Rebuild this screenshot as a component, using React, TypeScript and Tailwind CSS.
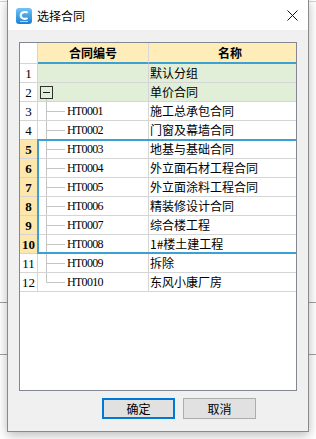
import React from "react";

type Row = { n: number; code?: string; name: string; green?: boolean; box?: boolean; last?: boolean; sel?: boolean };

const rows: Row[] = [
  { n: 1, name: "默认分组", green: true },
  { n: 2, name: "单价合同", green: true, box: true },
  { n: 3, code: "HT0001", name: "施工总承包合同" },
  { n: 4, code: "HT0002", name: "门窗及幕墙合同" },
  { n: 5, code: "HT0003", name: "地基与基础合同", sel: true },
  { n: 6, code: "HT0004", name: "外立面石材工程合同", sel: true },
  { n: 7, code: "HT0005", name: "外立面涂料工程合同", sel: true },
  { n: 8, code: "HT0006", name: "精装修设计合同", sel: true },
  { n: 9, code: "HT0007", name: "综合楼工程", sel: true },
  { n: 10, code: "HT0008", name: "1#楼土建工程", sel: true },
  { n: 11, code: "HT0009", name: "拆除" },
  { n: 12, code: "HT0010", name: "东风小康厂房", last: true },
];

function Connector({ last }: { last?: boolean }) {
  return (
    <svg width="29" height="18" className="shrink-0">
      <line x1="8.5" y1="0" x2="8.5" y2={last ? 9.5 : 18} stroke="#c4c4c4" strokeWidth="1" />
      <line x1="8.5" y1="9.5" x2="27" y2="9.5" stroke="#c4c4c4" strokeWidth="1" />
    </svg>
  );
}

function MinusBox() {
  return (
    <svg width="29" height="18" className="shrink-0">
      <rect x="2.5" y="3.5" width="12" height="12" fill="none" stroke="#303030" strokeWidth="1" />
      <line x1="5" y1="9.5" x2="12" y2="9.5" stroke="#202020" strokeWidth="1" />
      <line x1="8.5" y1="16" x2="8.5" y2="18" stroke="#c4c4c4" strokeWidth="1" />
    </svg>
  );
}

function AppIcon() {
  return (
    <svg width="16" height="16" viewBox="0 0 16 16" className="shrink-0">
      <defs>
        <linearGradient id="ig" x1="0" y1="0" x2="0" y2="1">
          <stop offset="0" stopColor="#6fc6f6" />
          <stop offset="1" stopColor="#1a7fd6" />
        </linearGradient>
      </defs>
      <rect x="0" y="0" width="16" height="16" rx="3" fill="url(#ig)" />
      <path d="M10.8 4.3 C7.6 3.2 4.6 4.9 4.7 7.6 C4.8 10.2 7.6 11.4 10.8 10.6" stroke="#ffffff" strokeWidth="2.1" fill="none" strokeLinecap="round" />
      <rect x="4" y="13" width="8" height="0.8" fill="#d6ecfb" />
    </svg>
  );
}

export default function App() {
  return (
    <div className="relative w-[316px] h-[439px] bg-white overflow-hidden font-['Noto_Sans_CJK_SC',sans-serif] text-[12px] text-black">
      <div className="absolute inset-0 flex flex-col">
        <div className="h-[1px] mt-[1px] bg-[#d4d4d4]" />
        <div className="h-[1px] mt-[300px] bg-[#a0a0a0]" />
        <div className="h-[1px] mt-[51px] bg-[#a0a0a0]" />
      </div>

      <div className="absolute left-[7px] top-[-1px] w-[302px] h-[433px] border border-[#8a8a8a] bg-[#f0f0f0] shadow-[0_3px_10px_rgba(0,0,0,0.28)] flex flex-col">
        <div className="h-[30px] bg-white flex items-center shrink-0">
          <div className="ml-[8px] mt-[1px] flex">
            <AppIcon />
          </div>
          <span className="ml-[5px] leading-none mt-[1px]">选择合同</span>
          <svg width="11" height="11" className="ml-auto mr-[10px] mt-[1px]">
            <line x1="0.5" y1="0.5" x2="10.5" y2="10.5" stroke="#111" strokeWidth="1" />
            <line x1="10.5" y1="0.5" x2="0.5" y2="10.5" stroke="#111" strokeWidth="1" />
          </svg>
        </div>

        <div className="flex-1 flex flex-col pt-[12px] px-[11px] pb-[12px]">
          <div className="relative h-[349px] shrink-0 border border-[#828790] bg-white overflow-hidden">
            <div className="flex h-[21px] w-[300px]">
              <div className="w-[18px] shrink-0 bg-white border-r border-b border-[#d5d5d5]" />
              <div className="w-[111px] shrink-0 bg-[#feedb9] border-r border-r-[#d8d8d8] border-b-2 border-b-[#3ba1d3] flex items-center justify-center font-bold leading-none">
                合同编号
              </div>
              <div className="w-[162px] shrink-0 bg-[#feedb9] border-b-2 border-b-[#3ba1d3] flex items-center justify-center font-bold leading-none">
                名称
              </div>
            </div>

            {rows.map((r) => (
              <div key={r.n} className="flex h-[19px] w-[300px] border-b border-[#d5d5d5]">
                <div
                  className={
                    r.sel
                      ? "w-[18px] shrink-0 border-r border-[#d5d5d5] bg-[#fde7ad] flex items-center justify-center font-['Liberation_Serif',serif] font-bold text-[13px] leading-none"
                      : "w-[18px] shrink-0 border-r border-[#d5d5d5] bg-white flex items-center justify-center font-['Liberation_Serif',serif] text-[13px] leading-none"
                  }
                >
                  {r.n}
                </div>
                <div
                  className={
                    r.green
                      ? "w-[111px] shrink-0 border-r border-[#d5d5d5] bg-[#e1efd8] flex items-center"
                      : "w-[111px] shrink-0 border-r border-[#d5d5d5] bg-white flex items-center"
                  }
                >
                  {r.box ? <MinusBox /> : r.code ? <Connector last={r.last} /> : null}
                  {r.code ? (
                    <span className="font-['Liberation_Serif',serif] text-[12px] tracking-[-0.7px] leading-none whitespace-nowrap">{r.code}</span>
                  ) : null}
                </div>
                <div
                  className={
                    r.green
                      ? "w-[162px] shrink-0 bg-[#e1efd8] flex items-center pl-[1px] whitespace-nowrap leading-none"
                      : "w-[162px] shrink-0 bg-white flex items-center pl-[1px] whitespace-nowrap leading-none"
                  }
                >
                  {r.name}
                </div>
              </div>
            ))}

            <div className="absolute left-[17px] top-[96px] w-[300px] h-[115px] border-2 border-[#3ba1d3] pointer-events-none" />
          </div>

          <div className="mt-[7px] h-[21px] flex gap-[8px] pl-[83px] shrink-0">
            <button className="w-[73px] h-[21px] border-2 border-[#0078d7] bg-[#e1e1e1] flex items-center justify-center leading-none text-[12px]">
              确定
            </button>
            <button className="w-[73px] h-[21px] border border-[#adadad] bg-[#e1e1e1] flex items-center justify-center leading-none text-[12px]">
              取消
            </button>
          </div>
        </div>
      </div>
    </div>
  );
}
